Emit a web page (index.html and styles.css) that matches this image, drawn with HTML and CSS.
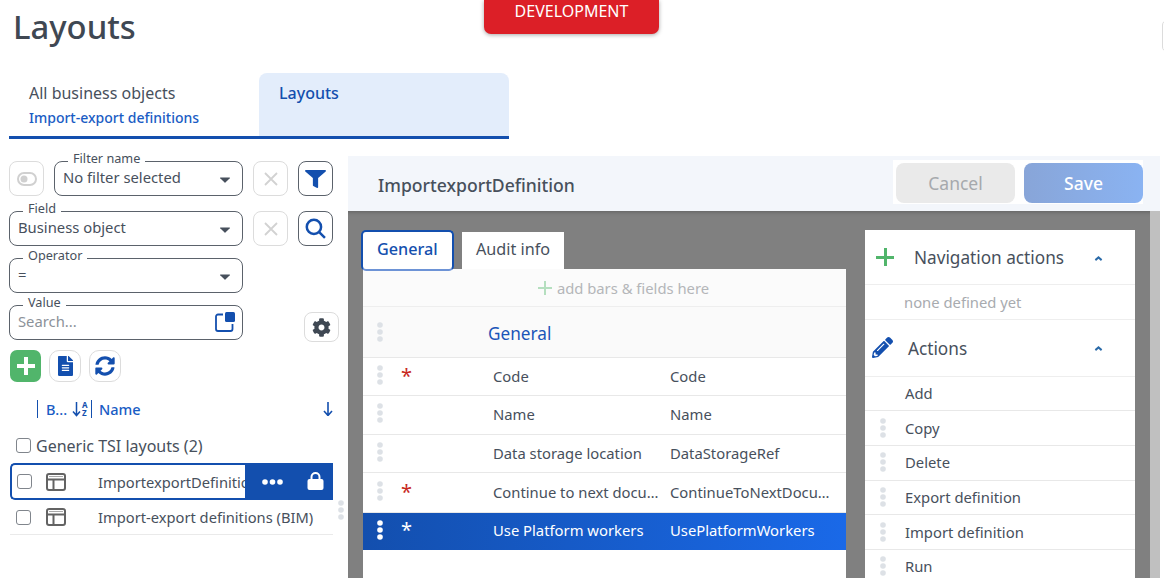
FILE: index.html
```html
<!DOCTYPE html>
<html lang="en">
  <head>
    <meta charset="UTF-8" />
    <meta name="viewport" content="width=device-width, initial-scale=1.0" />
    <title>Layouts</title>
    <link rel="stylesheet" href="styles.css">
  </head>
  <body>
    <svg class="defs" aria-hidden="true">
      <symbol id="i-filter" viewBox="0 0 512 512" preserveAspectRatio="none"><path d="M487.976 0H24.028C2.71 0-8.047 25.866 7.058 40.971L192 225.941V432c0 7.831 3.821 15.17 10.237 19.662l80 55.98C298.02 518.69 320 507.493 320 487.98V225.941l184.947-184.97C520.021 25.896 509.338 0 487.976 0z"/></symbol>
      <symbol id="i-cog" viewBox="0 0 512 512"><path d="M487.4 315.7l-42.6-24.6c4.3-23.2 4.3-47 0-70.2l42.6-24.6c4.9-2.8 7.1-8.6 5.5-14-11.1-35.6-30-67.8-54.7-94.6-3.8-4.1-10-5.1-14.8-2.3L380.8 110c-17.9-15.4-38.5-27.3-60.8-35.1V25.8c0-5.6-3.9-10.5-9.4-11.7-36.7-8.2-74.3-7.8-109.2 0-5.5 1.2-9.4 6.1-9.4 11.7V75c-22.2 7.9-42.8 19.8-60.8 35.1L88.7 85.5c-4.9-2.8-11-1.9-14.8 2.3-24.7 26.7-43.6 58.9-54.7 94.6-1.7 5.4.6 11.2 5.5 14L67.3 221c-4.3 23.2-4.3 47 0 70.2l-42.6 24.6c-4.9 2.8-7.1 8.6-5.5 14 11.1 35.6 30 67.8 54.7 94.6 3.8 4.1 10 5.1 14.8 2.3l42.6-24.6c17.9 15.4 38.5 27.3 60.8 35.1v49.2c0 5.6 3.9 10.5 9.4 11.7 36.7 8.2 74.3 7.8 109.2 0 5.5-1.2 9.4-6.1 9.4-11.7v-49.2c22.2-7.9 42.8-19.8 60.8-35.1l42.6 24.6c4.9 2.8 11 1.9 14.8-2.3 24.7-26.7 43.6-58.9 54.7-94.6 1.5-5.5-.7-11.3-5.6-14.1zM256 336c-44.1 0-80-35.9-80-80s35.9-80 80-80 80 35.9 80 80-35.9 80-80 80z"/></symbol>
      <symbol id="i-file" viewBox="0 0 384 512"><path d="M224 136V0H24C10.7 0 0 10.7 0 24v464c0 13.3 10.7 24 24 24h336c13.3 0 24-10.7 24-24V160H248c-13.2 0-24-10.8-24-24zm64 236c0 6.6-5.4 12-12 12H108c-6.6 0-12-5.4-12-12v-8c0-6.6 5.4-12 12-12h168c6.6 0 12 5.4 12 12v8zm0-64c0 6.6-5.4 12-12 12H108c-6.6 0-12-5.4-12-12v-8c0-6.6 5.4-12 12-12h168c6.6 0 12 5.4 12 12v8zm0-72v8c0 6.6-5.4 12-12 12H108c-6.6 0-12-5.4-12-12v-8c0-6.6 5.4-12 12-12h168c6.6 0 12 5.4 12 12zm96-114.1v6.1H256V0h6.1c6.4 0 12.5 2.5 17 7l97.9 98c4.5 4.5 7 10.6 7 16.9z"/></symbol>
      <symbol id="i-sync" viewBox="0 0 512 512"><path d="M370.72 133.28C339.458 104.008 298.888 87.962 255.848 88c-77.458.068-144.328 53.178-162.791 126.85-1.344 5.363-6.122 9.15-11.651 9.15H24.103c-7.498 0-13.194-6.807-11.807-14.176C33.933 94.924 134.813 8 256 8c66.448 0 126.791 26.136 171.315 68.685L463.03 40.97C478.149 25.851 504 36.559 504 57.941V192c0 13.255-10.745 24-24 24H345.941c-21.382 0-32.09-25.851-16.971-40.971l41.75-41.749zM32 296h134.059c21.382 0 32.09 25.851 16.971 40.971l-41.75 41.75c31.262 29.273 71.835 45.319 114.876 45.28 77.418-.07 144.315-53.144 162.787-126.849 1.344-5.363 6.122-9.15 11.651-9.15h57.304c7.498 0 13.194 6.807 11.807 14.176C478.067 417.076 377.187 504 256 504c-66.448 0-126.791-26.136-171.315-68.685L48.97 471.03C33.851 486.149 8 475.441 8 454.059V320c0-13.255 10.745-24 24-24z"/></symbol>
      <symbol id="i-pencil" viewBox="0 0 512 512"><path d="M497.9 142.1l-46.1 46.1c-4.7 4.7-12.3 4.7-17 0l-111-111c-4.7-4.7-4.7-12.3 0-17l46.1-46.1c18.7-18.7 49.1-18.7 67.9 0l60.1 60.1c18.8 18.7 18.8 49.1 0 67.9zM284.2 99.8L21.6 362.4.4 483.9c-2.9 16.4 11.4 30.6 27.8 27.8l121.5-21.3 262.6-262.6c4.7-4.7 4.7-12.3 0-17l-111-111c-4.8-4.7-12.4-4.7-17.1 0zM124.1 339.9c-5.5-5.5-5.5-14.3 0-19.8l154-154c5.5-5.5 14.3-5.5 19.8 0s5.5 14.3 0 19.8l-154 154c-5.5 5.5-14.3 5.5-19.8 0zM88 424h48v36.3l-64.5 11.3-31.1-31.1L51.7 376H88v48z"/></symbol>
      <symbol id="i-dots" viewBox="0 0 6 20"><circle cx="3" cy="3" r="2.800"/><circle cx="3" cy="10" r="2.800"/><circle cx="3" cy="17" r="2.800"/></symbol>
      <symbol id="i-cross" viewBox="0 0 14 14"><path d="M1 1l12 12M13 1L1 13" fill="none" stroke="#d2d2d2" stroke-width="1.800"/></symbol>
      <symbol id="i-layout" viewBox="0 0 20 18"><g fill="none" stroke="#636363" stroke-width="2"><rect x="1" y="1" width="18" height="16" rx="2"/><path d="M1 6.500h18M7.500 6.500V17"/></g><path d="M3 3.500h14" stroke="#a9a9a9" stroke-width="1"/></symbol>
      <symbol id="i-chevron" viewBox="0 0 10 6"><path d="M5 0l4.500 4L8 6 5 3.300 2 6 .5 4z"/></symbol>
      <symbol id="i-caret" viewBox="0 0 10 6"><path d="M.5.5h9a.5.5 0 0 1 .3.8L5.400 5.600a.6.6 0 0 1-.8 0L.2 1.300A.5.5 0 0 1 .5.500z"/></symbol>
    </svg>

    <div class="env-badge">DEVELOPMENT</div>
    <div class="edge-btn"></div>

    <header class="page-head">
      <h1>Layouts</h1>
    </header>

    <nav class="crumbs">
      <div class="crumb">
        <span class="crumb-top">All business objects</span>
        <span class="crumb-sub">Import-export definitions</span>
      </div>
      <div class="crumb crumb-active">
        <span class="crumb-top">Layouts</span>
      </div>
    </nav>

    <div class="workspace">
      <aside class="side">
        <div class="filter-row filter-row-first">
          <button class="icon-btn muted">
            <svg class="toggle-ico" viewBox="0 0 20 14"><rect x="1" y="1" width="18" height="12" rx="6" fill="none" stroke="#d0d0d0" stroke-width="2"/><circle cx="7" cy="7" r="3.500" fill="#d0d0d0"/></svg>
          </button>
          <div class="field field-name">
            <span class="field-label">Filter name</span>
            <span class="field-text">No filter selected</span>
            <svg class="caret"><use href="#i-caret"/></svg>
          </div>
          <button class="icon-btn muted"><svg class="cross-ico"><use href="#i-cross"/></svg></button>
          <button class="icon-btn strong"><svg class="filter-ico"><use href="#i-filter"/></svg></button>
        </div>
        <div class="filter-row">
          <div class="field">
            <span class="field-label">Field</span>
            <span class="field-text">Business object</span>
            <svg class="caret"><use href="#i-caret"/></svg>
          </div>
          <button class="icon-btn muted"><svg class="cross-ico"><use href="#i-cross"/></svg></button>
          <button class="icon-btn strong">
            <svg class="search-ico" viewBox="0 0 20 20"><circle cx="8.500" cy="8.500" r="6.800" fill="none" stroke="#134fae" stroke-width="2.400"/><path d="M13.500 13.500l5.500 5.500" stroke="#134fae" stroke-width="2.400" fill="none"/></svg>
          </button>
        </div>
        <div class="filter-row">
          <div class="field">
            <span class="field-label">Operator</span>
            <span class="field-text">=</span>
            <svg class="caret"><use href="#i-caret"/></svg>
          </div>
        </div>
        <div class="filter-row value-row">
          <div class="field">
            <span class="field-label">Value</span>
            <span class="field-text placeholder">Search...</span>
            <svg class="pick-ico" viewBox="0 0 20 20"><path d="M8 2.500H3a2 2 0 0 0-2 2V17a2 2 0 0 0 2 2h12.500a2 2 0 0 0 2-2v-5" fill="none" stroke="#134fae" stroke-width="1.800"/><rect x="10" y="0" width="10" height="10" rx="1.500" fill="#134fae"/></svg>
          </div>
          <button class="icon-btn gear-btn"><svg class="cog-ico"><use href="#i-cog"/></svg></button>
        </div>

        <div class="tools">
          <button class="tool tool-add"><span class="plus-white"></span></button>
          <button class="tool"><svg class="file-ico"><use href="#i-file"/></svg></button>
          <button class="tool"><svg class="sync-ico"><use href="#i-sync"/></svg></button>
        </div>

        <div class="col-head">
          <span class="col-b">B...</span>
          <span class="sort">
            <svg class="sort-ico" viewBox="0 0 9 16"><path d="M4.500 1v13M1 10.500L4.500 14.500 8 10.500" fill="none" stroke="#134fae" stroke-width="1.500"/></svg>
            <span class="sort-az"><span>A</span><span>Z</span></span>
          </span>
          <span class="col-name">Name</span>
          <svg class="down-ico" viewBox="0 0 10 14"><path d="M5 0v13M1 9l4 4.500L9 9" fill="none" stroke="#134fae" stroke-width="1.600"/></svg>
        </div>

        <div class="group"><span class="check"></span>Generic TSI layouts (2)</div>

        <div class="item item-selected">
          <span class="check"></span>
          <svg class="layout-ico"><use href="#i-layout"/></svg>
          <span class="item-name">ImportexportDefinition</span>
          <div class="item-actions">
            <svg class="more-ico" viewBox="0 0 21 6"><circle cx="3" cy="3" r="2.800" fill="#fff"/><circle cx="10.500" cy="3" r="2.800" fill="#fff"/><circle cx="18" cy="3" r="2.800" fill="#fff"/></svg>
            <svg class="lock-ico" viewBox="0 0 16 18"><path d="M4 8V5a4 4 0 0 1 8 0v3" fill="none" stroke="#fff" stroke-width="2"/><rect x="0" y="7" width="16" height="11" rx="2" fill="#fff"/></svg>
          </div>
        </div>
        <div class="item">
          <span class="check"></span>
          <svg class="layout-ico"><use href="#i-layout"/></svg>
          <span class="item-name">Import-export definitions (BIM)</span>
        </div>
      </aside>

      <div class="splitter"><svg class="dots"><use href="#i-dots"/></svg></div>

      <main class="editor">
        <div class="editor-head">
          <h2>ImportexportDefinition</h2>
          <div class="editor-btns">
            <button class="btn btn-cancel">Cancel</button>
            <button class="btn btn-save">Save</button>
          </div>
        </div>

        <div class="canvas">
          <section class="form-col">
            <div class="form-tabs">
              <span class="form-tab form-tab-active">General</span>
              <span class="form-tab">Audit info</span>
            </div>
            <div class="form-panel">
              <div class="add-row"><span class="plus-soft"></span>add bars &amp; fields here</div>
              <div class="bar-row">
                <svg class="dots"><use href="#i-dots"/></svg>
                <span class="bar-title">General</span>
              </div>
              <div class="f-row f-38">
                <svg class="dots"><use href="#i-dots"/></svg>
                <span class="star">*</span>
                <span class="f-label">Code</span>
                <span class="f-value">Code</span>
              </div>
              <div class="f-row f-39">
                <svg class="dots"><use href="#i-dots"/></svg>
                <span class="star"></span>
                <span class="f-label">Name</span>
                <span class="f-value">Name</span>
              </div>
              <div class="f-row f-38">
                <svg class="dots"><use href="#i-dots"/></svg>
                <span class="star"></span>
                <span class="f-label">Data storage location</span>
                <span class="f-value">DataStorageRef</span>
              </div>
              <div class="f-row f-40">
                <svg class="dots"><use href="#i-dots"/></svg>
                <span class="star">*</span>
                <span class="f-label">Continue to next document</span>
                <span class="f-value">ContinueToNextDocument</span>
              </div>
              <div class="f-row f-row-selected">
                <svg class="dots"><use href="#i-dots"/></svg>
                <span class="star">*</span>
                <span class="f-label">Use Platform workers</span>
                <span class="f-value">UsePlatformWorkers</span>
              </div>
            </div>
          </section>

          <section class="actions-col">
            <div class="act-head act-head-nav">
              <span class="plus-green"></span>
              <span class="act-title">Navigation actions</span>
              <svg class="chev"><use href="#i-chevron"/></svg>
            </div>
            <div class="act-none">none defined yet</div>
            <div class="act-head act-head-edit">
              <svg class="pencil-ico"><use href="#i-pencil"/></svg>
              <span class="act-title">Actions</span>
              <svg class="chev"><use href="#i-chevron"/></svg>
            </div>
            <div class="act-item"><span class="act-slot"></span>Add</div>
            <div class="act-item"><span class="act-slot"><svg class="dots"><use href="#i-dots"/></svg></span>Copy</div>
            <div class="act-item"><span class="act-slot"><svg class="dots"><use href="#i-dots"/></svg></span>Delete</div>
            <div class="act-item"><span class="act-slot"><svg class="dots"><use href="#i-dots"/></svg></span>Export definition</div>
            <div class="act-item"><span class="act-slot"><svg class="dots"><use href="#i-dots"/></svg></span>Import definition</div>
            <div class="act-item"><span class="act-slot"><svg class="dots"><use href="#i-dots"/></svg></span>Run</div>
          </section>

          <div class="scroll-track"></div>
        </div>
      </main>
    </div>
  </body>
</html>
```

FILE: styles.css
```css
html, body{
  height: 100%;
}
body{
  margin: 0;
  height: 578px;
  overflow: hidden;
  position: relative;
  font-family: "Noto Sans", "Open Sans", sans-serif;
  font-size: 14.8px;
  color: #47505c;
  background-color: white;
}
button{
  font-family: inherit;
  padding: 0;
  cursor: pointer;
}
.defs{
  display: none;
}

/* header */
.env-badge{
  position: absolute;
  left: 484px;
  top: 0;
  width: 175px;
  height: 34px;
  padding-bottom: 13px;
  box-sizing: border-box;
  display: flex;
  align-items: flex-end;
  justify-content: center;
  background-color: #dc1f27;
  color: white;
  font-size: 16px;
  line-height: 20px;
  border-radius: 0 0 7px 7px;
  box-shadow: 0 1px 4px rgba(0, 0, 0, 0.35);
}
.edge-btn{
  position: absolute;
  left: 1162px;
  top: 20px;
  width: 20px;
  height: 32px;
  box-sizing: border-box;
  border: 1px solid #dcdcdc;
  border-radius: 5px;
}
.page-head{
  height: 73px;
  padding-left: 13px;
}
h1{
  margin: 0;
  font-size: 32.8px;
  font-weight: 500;
  line-height: 53px;
  color: #3f4853;
}
.crumbs{
  display: flex;
  width: 500px;
  height: 66px;
  box-sizing: border-box;
  margin-left: 9px;
  border-bottom: 3px solid #134fae;
}
.crumb{
  width: 250px;
  padding: 8px 0 0 20px;
  box-sizing: border-box;
  display: flex;
  flex-direction: column;
}
.crumb-top{
  font-size: 16px;
  line-height: 24px;
}
.crumb-sub{
  font-size: 14px;
  font-weight: 500;
  line-height: 24px;
  margin-top: 1px;
  color: #1a5cc4;
}
.crumb-active{
  background-color: #e3edfb;
  border-radius: 8px 8px 0 0;
}
.crumb-active .crumb-top{
  color: #134fae;
  font-weight: 500;
}

/* layout */
.workspace{
  display: flex;
  margin-top: 17px;
  padding-left: 9px;
}
.side{
  width: 324px;
  flex: none;
  padding-top: 5px;
}
.splitter{
  width: 15px;
  flex: none;
  padding-top: 344px;
  display: flex;
  justify-content: center;
  box-sizing: border-box;
}
.editor{
  width: 812px;
  flex: none;
}

/* filter */
.filter-row{
  display: flex;
  gap: 10px;
  margin-bottom: 12px;
}
.filter-row-first{
  margin-bottom: 15px;
}
.field{
  position: relative;
  width: 234px;
  height: 35px;
  flex: none;
  box-sizing: border-box;
  border: 1px solid #5b626b;
  border-radius: 8px;
  padding-left: 8px;
  display: flex;
  align-items: center;
}
.field-name{
  width: 189px;
}
.field-label{
  position: absolute;
  left: 13px;
  top: -11px;
  padding: 0 5px;
  font-size: 12.7px;
  line-height: 15px;
  background-color: white;
  color: #47505c;
}
.field-text{
  font-size: 14.8px;
  line-height: 20px;
  margin-top: -4px;
}
.placeholder{
  color: #8c9299;
}
.caret{
  position: absolute;
  right: 12px;
  top: 15px;
  width: 10px;
  height: 6px;
  fill: #47505c;
}
.pick-ico{
  position: absolute;
  right: 7px;
  top: 6px;
  width: 20px;
  height: 20px;
}
.icon-btn{
  width: 35px;
  height: 35px;
  flex: none;
  box-sizing: border-box;
  background-color: white;
  border: 1px solid #dcdcdc;
  border-radius: 8px;
  display: flex;
  align-items: center;
  justify-content: center;
}
.strong{
  border-color: #5b626b;
}
.cross-ico{
  width: 14px;
  height: 14px;
}
.toggle-ico{
  width: 20px;
  height: 14px;
}
.filter-ico{
  width: 21px;
  height: 18px;
  fill: #134fae;
}
.search-ico{
  width: 21px;
  height: 21px;
}
.value-row{
  margin-bottom: 8px;
}
.gear-btn{
  margin-left: 51px;
  margin-top: 7px;
  height: 30px;
}
.cog-ico{
  width: 19px;
  height: 19px;
  fill: #3f4853;
}
.tools{
  display: flex;
  align-items: center;
  gap: 8px;
  padding-left: 1px;
}
.tool{
  width: 32px;
  height: 32px;
  box-sizing: border-box;
  background-color: white;
  border: 1px solid #dcdcdc;
  border-radius: 10px;
  display: flex;
  align-items: center;
  justify-content: center;
}
.tool-add{
  width: 31px;
  background-color: #51b56b;
  border: none;
  border-radius: 7px;
}
.plus-white{
  width: 18px;
  height: 18px;
  background:
    linear-gradient(white, white) center / 18px 4px no-repeat,
    linear-gradient(white, white) center / 4px 18px no-repeat;
}
.file-ico{
  width: 15px;
  height: 20px;
  fill: #134fae;
}
.sync-ico{
  width: 20px;
  height: 20px;
  fill: #134fae;
}

/* list */
.col-head{
  height: 18px;
  margin-top: 18px;
  margin-left: 28px;
  display: flex;
  align-items: center;
  color: #1a5cc4;
  font-weight: 500;
  font-size: 14.5px;
}
.col-b{
  border-left: 1px solid #134fae;
  padding-left: 8px;
  width: 26px;
  line-height: 18px;
}
.sort{
  display: flex;
  align-items: center;
  gap: 1px;
  width: 19px;
  flex: none;
}
.sort-ico{
  width: 9px;
  height: 16px;
}
.sort-az{
  display: flex;
  flex-direction: column;
  font-size: 8px;
  font-weight: 700;
  line-height: 8px;
  color: #134fae;
}
.col-name{
  border-left: 1px solid #134fae;
  padding-left: 7px;
  line-height: 18px;
  flex: 1;
}
.down-ico{
  width: 10px;
  height: 14px;
  margin-left: auto;
}
.group{
  margin-top: 18px;
  margin-left: 7px;
  height: 19px;
  display: flex;
  align-items: center;
  font-size: 16px;
  gap: 5px;
}
.check{
  width: 15px;
  height: 15px;
  flex: none;
  box-sizing: border-box;
  background-color: white;
  border: 1px solid #80858c;
  border-radius: 3px;
}
.item{
  height: 35px;
  box-sizing: border-box;
  margin-left: 1px;
  display: flex;
  align-items: center;
  position: relative;
  border-bottom: 1px solid #eaeaea;
  padding-left: 6px;
  font-size: 14.7px;
}
.item-selected{
  margin-top: 8px;
  height: 37px;
  padding-left: 5px;
  border: 2px solid #134fae;
  border-right: none;
  border-radius: 5px 0 0 5px;
  overflow: hidden;
}
.layout-ico{
  width: 20px;
  height: 18px;
  margin-left: 15px;
  flex: none;
}
.item-selected .layout-ico{
  margin-left: 14px;
}
.item-name{
  margin-left: 32px;
  white-space: nowrap;
}
.item-actions{
  position: absolute;
  right: 0;
  top: 0;
  bottom: 0;
  width: 88px;
  background-color: #134fae;
  display: flex;
  align-items: center;
  color: white;
}
.more-ico{
  width: 21px;
  height: 6px;
  margin-left: 17px;
}
.lock-ico{
  width: 17px;
  height: 18px;
  margin-left: 24px;
  margin-top: -2px;
}
.dots{
  width: 6px;
  height: 20px;
  fill: #dde1e6;
  flex: none;
}

/* editor */
.editor-head{
  height: 55px;
  display: flex;
  align-items: center;
  background-color: #f3f6fb;
  padding-left: 30px;
  justify-content: space-between;
  padding-right: 17px;
}
h2{
  margin: 2px 0 0;
  font-size: 17.6px;
  font-weight: 500;
  color: #47505c;
}
.editor-btns{
  display: flex;
  gap: 9px;
  padding: 3px 0 1px 3px;
  margin-bottom: 3px;
  background-color: white;
}
.btn{
  width: 119px;
  height: 40px;
  border: none;
  border-radius: 8px;
  font-size: 17.5px;
}
.btn-cancel{
  background-color: #eaeaea;
  color: #a6a9ad;
}
.btn-save{
  background: linear-gradient(to right, #88a5d8, #8ab3f2);
  color: white;
  font-weight: 500;
}
.canvas{
  height: 367px;
  background-color: #808080;
  display: flex;
  overflow: hidden;
  box-shadow: inset 0 4px 4px -3px rgba(0, 0, 0, 0.25);
}
.form-col{
  width: 483px;
  margin-left: 15px;
  flex: none;
}
.form-tabs{
  display: flex;
  align-items: flex-start;
  gap: 8px;
  height: 58px;
  padding-top: 19px;
  margin-left: -2px;
  box-sizing: border-box;
  position: relative;
}
.form-tab{
  height: 37px;
  margin-top: 2px;
  box-sizing: border-box;
  padding: 0 14px 3px;
  display: flex;
  align-items: center;
  background-color: white;
  font-size: 16.2px;
}
.form-tab-active{
  width: 93px;
  height: 41px;
  margin-top: 0;
  padding: 0 14px 4px;
  border: 2px solid #134fae;
  border-bottom-color: #6d93d6;
  border-radius: 5px;
  color: #134fae;
  font-weight: 500;
  z-index: 1;
}
.form-panel{
  height: 309px;
  background-color: white;
}
.add-row{
  height: 38px;
  display: flex;
  align-items: center;
  justify-content: center;
  background-color: #fbfbfb;
  border-bottom: 1px solid #eeeeee;
  box-sizing: border-box;
  padding-left: 38px;
  color: #b4b6b9;
  font-size: 14.8px;
  gap: 5px;
}
.plus-soft{
  width: 14px;
  height: 14px;
  background:
    linear-gradient(#b5dfbf, #b5dfbf) center / 14px 2px no-repeat,
    linear-gradient(#b5dfbf, #b5dfbf) center / 2px 14px no-repeat;
}
.bar-row{
  height: 51px;
  box-sizing: border-box;
  display: flex;
  align-items: center;
  background-color: #fafafa;
  border-bottom: 1px solid #e8e8e8;
  padding-left: 14px;
}
.bar-title{
  margin-left: 105px;
  margin-top: 2px;
  font-size: 17.2px;
  color: #1a55b8;
}
.f-row{
  display: flex;
  align-items: center;
  box-sizing: border-box;
  padding: 0 0 2px 14px;
  border-bottom: 1px solid #e8e8e8;
  font-size: 14.8px;
}
.f-row .dots{
  margin-top: -2px;
}
.f-38{
  height: 38px;
}
.f-39{
  height: 39px;
}
.f-40{
  height: 40px;
}
.star{
  width: 91px;
  margin-left: 18px;
  flex: none;
  color: #c8281e;
  font-size: 20px;
  line-height: 20px;
}
.f-label{
  width: 168px;
  margin-right: 9px;
  margin-left: 1px;
  flex: none;
  white-space: nowrap;
  overflow: hidden;
  text-overflow: ellipsis;
}
.f-value{
  width: 162px;
  flex: none;
  white-space: nowrap;
  overflow: hidden;
  text-overflow: ellipsis;
}
.f-row-selected{
  height: 37px;
  padding-bottom: 4px;
  color: white;
  border-bottom: none;
  background: linear-gradient(to right, #134fae, #1a69e8);
}
.f-row-selected .dots{
  margin-top: 0;
  fill: white;
}
.f-row-selected .star{
  color: white;
}
.actions-col{
  width: 270px;
  margin-top: 19px;
  margin-left: 19px;
  flex: none;
  background-color: white;
}
.act-head{
  display: flex;
  align-items: center;
  position: relative;
  border-bottom: 1px solid #eeeeee;
  box-sizing: border-box;
}
.act-head-nav{
  height: 55px;
  padding-left: 11px;
}
.act-head-edit{
  height: 56.500px;
  padding-left: 7px;
}
.act-title{
  font-size: 17.2px;
}
.act-head-nav .act-title{
  margin-left: 20px;
}
.act-head-edit .act-title{
  margin-left: 15px;
  margin-top: 2px;
}
.plus-green{
  width: 18px;
  height: 18px;
  flex: none;
  background:
    linear-gradient(#51b56b, #51b56b) center / 18px 3px no-repeat,
    linear-gradient(#51b56b, #51b56b) center / 3px 18px no-repeat;
}
.pencil-ico{
  width: 21px;
  height: 21px;
  fill: #134fae;
  flex: none;
}
.chev{
  position: absolute;
  left: 229px;
  top: 26px;
  width: 9px;
  height: 5px;
  fill: #2a6aa8;
}
.act-none{
  height: 35px;
  box-sizing: border-box;
  padding-left: 39px;
  display: flex;
  align-items: center;
  border-bottom: 1px solid #eeeeee;
  color: #a8abaf;
  font-size: 14.8px;
}
.act-item{
  height: 34.700px;
  box-sizing: border-box;
  padding-bottom: 1px;
  display: flex;
  align-items: center;
  border-bottom: 1px solid #e8e8e8;
  font-size: 14.8px;
}
.act-slot{
  width: 40px;
  flex: none;
  padding-left: 15px;
  box-sizing: border-box;
  display: flex;
}
.scroll-track{
  width: 10px;
  height: 100%;
  margin-left: 15px;
  flex: none;
  background-color: #c0c0c0;
}
```
